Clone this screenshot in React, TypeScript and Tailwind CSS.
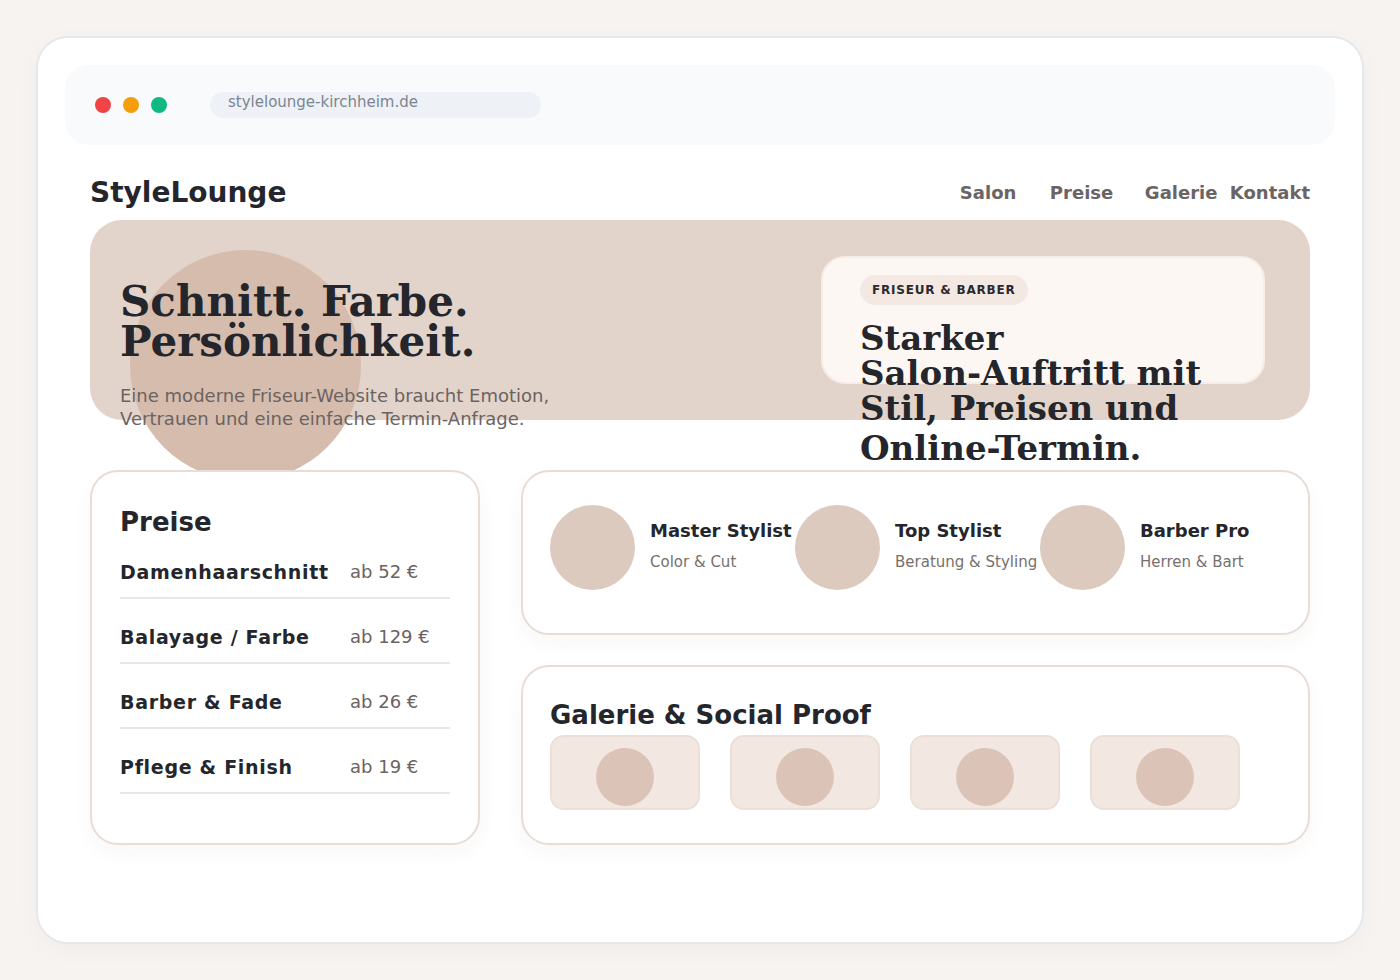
import * as React from 'react';

const PRICES = [
  { name: 'Damenhaarschnitt', price: 'ab 52 €' },
  { name: 'Balayage / Farbe', price: 'ab 129 €' },
  { name: 'Barber & Fade', price: 'ab 26 €' },
  { name: 'Pflege & Finish', price: 'ab 19 €' },
];

const TEAM = [
  { name: 'Master Stylist', role: 'Color & Cut' },
  { name: 'Top Stylist', role: 'Beratung & Styling' },
  { name: 'Barber Pro', role: 'Herren & Bart' },
];

const sans = "font-['DejaVu_Sans','Liberation_Sans',sans-serif]";
const serif = "font-['DejaVu_Serif','Liberation_Serif',serif]";

export default function App() {
  return (
    <div className={`min-h-[980px] bg-[#f7f3f0] p-[36px] ${sans} text-[#24262c]`}>
      <div className="h-[908px] rounded-[32px] border-2 border-[#e6e8ec] bg-white p-[27px] shadow-[0_6px_24px_rgba(0,0,0,0.03)]">
        {/* Browser chrome */}
        <div className="flex h-[80px] items-center rounded-[24px] bg-[#f8fafc] pl-[30px]">
          <div className="flex gap-[12px]">
            <span className="h-[16px] w-[16px] rounded-full bg-[#ef4444]" />
            <span className="h-[16px] w-[16px] rounded-full bg-[#f59e0b]" />
            <span className="h-[16px] w-[16px] rounded-full bg-[#10b981]" />
          </div>
          <div className="ml-[43px] flex h-[26px] w-[331px] items-center rounded-full bg-[#eef1f5] px-[18px] pb-[7px] text-[15px] leading-[20px] text-[#7c8594]">
            stylelounge-kirchheim.de
          </div>
        </div>

        <div className="px-[25px]">
          {/* Nav */}
          <nav className="mb-[11px] flex items-center justify-between pt-[32px]">
            <div className="text-[28px] font-bold leading-[32px]">StyleLounge</div>
            <div className="flex items-center text-[18px] font-bold leading-[24px] text-[#6b6464]">
              <a className="w-[90px]">Salon</a>
              <a className="w-[95px]">Preise</a>
              <a className="w-[85px]">Galerie</a>
              <a>Kontakt</a>
            </div>
          </nav>

          {/* Hero */}
          <section className="relative flex h-[200px] justify-between rounded-[32px] bg-[#e2d4ca] pl-[30px] pr-[45px]">
            <div aria-hidden className="absolute left-[40px] top-[30px] h-[231px] w-[231px] rounded-full bg-[#d6bcad]" />
            <div className="relative pt-[62px]">
              <h1 className={`${serif} text-[42px] font-bold leading-[40px]`}>
                Schnitt. Farbe.
                <br />
                Persönlichkeit.
              </h1>
              <p className="mt-[22px] text-[18px] leading-[23px] text-[#6b6361]">
                Eine moderne Friseur-Website braucht Emotion,
                <br />
                Vertrauen und eine einfache Termin-Anfrage.
              </p>
            </div>
            <div className="relative mt-[36px] h-[128px] w-[444px] rounded-[24px] border-2 border-[#f7ede8] bg-[#fdf7f4] px-[37px] pt-[17px]">
              <span className="inline-flex h-[30px] items-center rounded-full bg-[#f3e8e2] px-[12px] text-[12px] font-bold tracking-[0.8px] text-[#2a2a2e]">
                FRISEUR &amp; BARBER
              </span>
              <h2 className={`${serif} mt-[16px] whitespace-nowrap text-[34px] font-bold leading-[35px]`}>
                Starker
                <br />
                Salon-Auftritt mit
                <br />
                Stil, Preisen und
                <span className="block leading-[45px]">Online-Termin.</span>
              </h2>
            </div>
          </section>

          {/* Content */}
          <div className="mt-[50px] grid grid-cols-[390px_1fr] gap-[41px]">
            <div className="relative h-[375px] rounded-[28px] border-2 border-[#e8ddd5] bg-white px-[28px] pt-[34px] shadow-[0_8px_20px_rgba(60,40,30,0.04)]">
              <h3 className="text-[26px] font-bold leading-[32px]">Preise</h3>
              <div>
                {PRICES.map((p, i) => (
                  <div
                    key={p.name}
                    className={`flex border-b-2 border-[#ebe6e2] pb-[13px] ${i === 0 ? 'pt-[22px]' : 'pt-[26px]'}`}
                  >
                    <span className="w-[230px] text-[19px] font-bold leading-[24px] tracking-[0.7px]">{p.name}</span>
                    <span className="text-[18px] leading-[24px] text-[#6b6361]">{p.price}</span>
                  </div>
                ))}
              </div>
            </div>

            <div className="flex flex-col gap-[30px]">
              <div className="relative h-[165px] rounded-[28px] border-2 border-[#e8ddd5] bg-white px-[27px] pt-[33px] shadow-[0_8px_20px_rgba(60,40,30,0.04)]">
                <div className="grid grid-cols-3 gap-[4px]">
                  {TEAM.map((t) => (
                    <div key={t.name} className="flex items-start gap-[15px]">
                      <span className="h-[85px] w-[85px] shrink-0 rounded-full bg-[#dccabe]" />
                      <div className="mt-[14px] whitespace-nowrap">
                        <div className="text-[18px] font-bold leading-[24px]">{t.name}</div>
                        <div className="mt-[8px] text-[15px] leading-[22px] text-[#77706c]">{t.role}</div>
                      </div>
                    </div>
                  ))}
                </div>
              </div>

              <div className="relative h-[180px] rounded-[28px] border-2 border-[#e8ddd5] bg-white px-[27px] pt-[32px] shadow-[0_8px_20px_rgba(60,40,30,0.04)]">
                <h3 className="text-[26px] font-bold leading-[32px]">Galerie &amp; Social Proof</h3>
                <div className="mt-[4px] flex gap-[30px]">
                  {[0, 1, 2, 3].map((n) => (
                    <div
                      key={n}
                      className="flex h-[75px] w-[150px] items-center justify-center rounded-[14px] border-2 border-[#ebdfd7] bg-[#f3e8e1]"
                    >
                      <span className="mt-[8px] h-[58px] w-[58px] rounded-full bg-[#dbc3b7]" />
                    </div>
                  ))}
                </div>
              </div>
            </div>
          </div>
        </div>
      </div>
    </div>
  );
}
